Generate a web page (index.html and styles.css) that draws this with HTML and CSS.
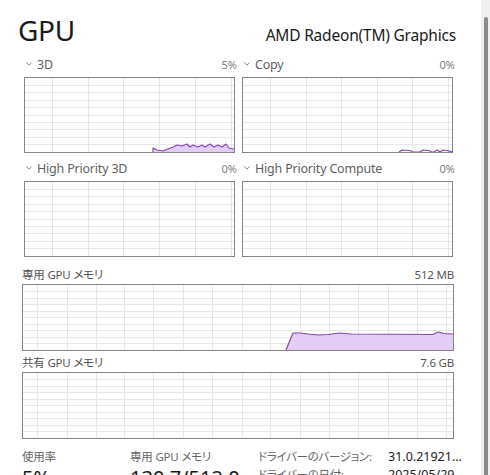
FILE: index.html
```html
<!DOCTYPE html>
<html lang="ja">
<head>
<meta charset="utf-8">
<title>GPU</title>
<link rel="stylesheet" href="styles.css">
</head>
<body>
<div class="window">
  <main class="content">
    <header class="header">
      <h1 class="title">GPU</h1>
      <div class="device">AMD Radeon(TM) Graphics</div>
    </header>

    <section class="engines">
      <div class="engine">
        <div class="engine-head">
          <span class="engine-name"><svg class="chev" viewBox="0 0 6 4"><polyline points="0.5,0.5 3,3.2 5.5,0.5"/></svg>3D</span>
          <span class="engine-val">5%</span>
        </div>
        <div class="chart chart-engine">
          <svg viewBox="0 0 209 74" preserveAspectRatio="none">
            <path class="grid" d="M0 7.5H209M0 14.5H209M0 22.5H209M0 29.5H209M0 37.5H209M0 44.5H209M0 51.5H209M0 59.5H209M0 66.5H209M27.5 0V74M63.5 0V74M98.5 0V74M134.5 0V74M170.5 0V74M206.5 0V74"/>
            <polygon class="area" points="128,74 128,70 132,72 138,73 143,71 148,69 152,67 157,68 162,66 165,69 168,67 173,69 177,67 180,69 185,66 189,69 193,67 197,69 201,66 204,70 209,71 209,74"/>
            <polyline class="line" points="128,74 128,70 132,72 138,73 143,71 148,69 152,67 157,68 162,66 165,69 168,67 173,69 177,67 180,69 185,66 189,69 193,67 197,69 201,66 204,70 209,71"/>
          </svg>
        </div>
      </div>
      <div class="engine">
        <div class="engine-head">
          <span class="engine-name"><svg class="chev" viewBox="0 0 6 4"><polyline points="0.5,0.5 3,3.2 5.5,0.5"/></svg>Copy</span>
          <span class="engine-val">0%</span>
        </div>
        <div class="chart chart-engine">
          <svg viewBox="0 0 209 74" preserveAspectRatio="none">
            <path class="grid" d="M0 7.5H209M0 14.5H209M0 22.5H209M0 29.5H209M0 37.5H209M0 44.5H209M0 51.5H209M0 59.5H209M0 66.5H209M27.5 0V74M63.5 0V74M98.5 0V74M134.5 0V74M169.5 0V74M205.5 0V74"/>
            <polyline class="line" points="156,74 159,72 167,72.5 170,74 177,74 180,72 186,72.5 189,74 191,74 194,72 197,74 200,72 204,72.5 209,74"/>
          </svg>
        </div>
      </div>
      <div class="engine">
        <div class="engine-head">
          <span class="engine-name"><svg class="chev" viewBox="0 0 6 4"><polyline points="0.5,0.5 3,3.2 5.5,0.5"/></svg>High Priority 3D</span>
          <span class="engine-val">0%</span>
        </div>
        <div class="chart chart-engine">
          <svg viewBox="0 0 209 74" preserveAspectRatio="none">
            <path class="grid" d="M0 7.5H209M0 14.5H209M0 22.5H209M0 29.5H209M0 37.5H209M0 44.5H209M0 51.5H209M0 59.5H209M0 66.5H209M27.5 0V74M63.5 0V74M98.5 0V74M134.5 0V74M170.5 0V74M206.5 0V74"/>
          </svg>
        </div>
      </div>
      <div class="engine">
        <div class="engine-head">
          <span class="engine-name"><svg class="chev" viewBox="0 0 6 4"><polyline points="0.5,0.5 3,3.2 5.5,0.5"/></svg>High Priority Compute</span>
          <span class="engine-val">0%</span>
        </div>
        <div class="chart chart-engine">
          <svg viewBox="0 0 209 74" preserveAspectRatio="none">
            <path class="grid" d="M0 7.5H209M0 14.5H209M0 22.5H209M0 29.5H209M0 37.5H209M0 44.5H209M0 51.5H209M0 59.5H209M0 66.5H209M27.5 0V74M63.5 0V74M98.5 0V74M134.5 0V74M169.5 0V74M205.5 0V74"/>
          </svg>
        </div>
      </div>
    </section>

    <section class="memory">
      <div class="mem-head"><span>専用 GPU メモリ</span><span>512 MB</span></div>
      <div class="chart chart-mem">
        <svg viewBox="0 0 430 65" preserveAspectRatio="none">
          <path class="grid" d="M0 6.5H430M0 13.5H430M0 19.5H430M0 26.5H430M0 32.5H430M0 39.5H430M0 45.5H430M0 52.5H430M0 58.5H430M14.5 0V65M44.5 0V65M73.5 0V65M101.5 0V65M130.5 0V65M160.5 0V65M189.5 0V65M219.5 0V65M247.5 0V65M277.5 0V65M306.5 0V65M335.5 0V65M365.5 0V65M394.5 0V65M423.5 0V65"/>
          <polygon class="area" points="263,65 270,48 277,48 285,49 295,50 305,49.5 317,48 328,49 410,49.5 415,47 421,48.5 430,49 430,65"/>
          <polyline class="line" points="263,65 270,48 277,48 285,49 295,50 305,49.5 317,48 328,49 410,49.5 415,47 421,48.5 430,49"/>
        </svg>
      </div>
      <div class="mem-head"><span>共有 GPU メモリ</span><span>7.6 GB</span></div>
      <div class="chart chart-mem">
        <svg viewBox="0 0 430 65" preserveAspectRatio="none">
          <path class="grid" d="M0 6.5H430M0 13.5H430M0 19.5H430M0 26.5H430M0 32.5H430M0 39.5H430M0 45.5H430M0 52.5H430M0 58.5H430M14.5 0V65M44.5 0V65M73.5 0V65M101.5 0V65M130.5 0V65M160.5 0V65M189.5 0V65M219.5 0V65M247.5 0V65M277.5 0V65M306.5 0V65M335.5 0V65M365.5 0V65M394.5 0V65M423.5 0V65"/>
        </svg>
      </div>
    </section>

    <section class="stats">
      <div class="stat-label">使用率</div>
      <div class="stat-label">専用 GPU メモリ</div>
      <div class="info-key">ドライバーのバージョン:</div>
      <div class="info-val">31.0.21921...</div>
      <div class="stat-val">5%</div>
      <div class="stat-val">130.7/512.0 MB</div>
      <div class="info-key">ドライバーの日付:</div>
      <div class="info-val">2025/05/29</div>
    </section>
  </main>
  <div class="scrollbar"><div class="thumb"></div></div>
</div>
</body>
</html>
```

FILE: styles.css
```css
* { box-sizing: border-box; }
html, body {
  margin: 0;
  padding: 0;
  background: #ffffff;
}
body {
  width: 490px;
  height: 475px;
  overflow: hidden;
  font-family: "Noto Sans", "Noto Sans CJK JP", sans-serif;
  color: #1a1a1a;
}
.window {
  display: flex;
  width: 490px;
  height: 475px;
}
.content {
  width: 481px;
  padding: 0 0 0 22px;
  overflow: hidden;
}
.header {
  display: flex;
  align-items: baseline;
  justify-content: space-between;
  width: 434px;
  padding-top: 11px;
  height: 54px;
}
.title {
  margin: 0 0 0 -4px;
  font-size: 28px;
  line-height: 38px;
  font-weight: 400;
  letter-spacing: -0.3px;
}
.device {
  font-size: 15.5px;
  line-height: 20px;
  letter-spacing: -0.2px;
}
.engines {
  display: grid;
  grid-template-columns: 211px 211px;
  column-gap: 7px;
  row-gap: 5px;
  margin-left: 2px;
  width: 432px;
}
.engine-head {
  display: flex;
  justify-content: space-between;
  align-items: center;
  height: 20px;
  margin-bottom: 3px;
  margin-right: -2px;
}
.engine-name {
  display: flex;
  align-items: center;
  gap: 5px;
  padding-left: 2px;
  font-size: 12.5px;
  color: #5f5f5f;
  letter-spacing: -0.2px;
}
.engine-val {
  font-size: 11px;
  color: #808080;
}
.chev {
  width: 6px;
  height: 4px;
  fill: none;
  stroke: #8a8a8a;
  stroke-width: 1;
}
.chart {
  border: 1px solid #858585;
  background: #ffffff;
}
.chart svg {
  display: block;
  width: 100%;
  height: 100%;
}
.chart-engine {
  height: 76px;
}
.chart-mem {
  width: 432px;
  height: 67px;
}
.grid {
  stroke: #e6e6e6;
  stroke-width: 1;
  fill: none;
}
.area {
  fill: #e3cdf7;
  stroke: none;
}
.line {
  fill: none;
  stroke: #8646b8;
  stroke-width: 1.2;
  stroke-linejoin: round;
}
.memory {
  margin-top: 9px;
  width: 432px;
  display: flex;
  flex-direction: column;
}
.mem-head {
  display: flex;
  justify-content: space-between;
  align-items: center;
  height: 16px;
  margin-bottom: 2px;
  margin-top: 3px;
  font-size: 11.5px;
  color: #555555;
  font-feature-settings: "palt";
  letter-spacing: -0.2px;
}
.memory .mem-head:first-child {
  margin-top: 0;
}
.stats {
  display: grid;
  grid-template-columns: 108px 128px 130px 1fr;
  grid-template-rows: 18px 24px;
  margin-top: 9px;
  font-feature-settings: "palt";
}
.stat-label {
  font-size: 11.5px;
  line-height: 18px;
  color: #666666;
  letter-spacing: -0.2px;
}
.info-key {
  font-size: 11.5px;
  line-height: 18px;
  color: #666666;
  letter-spacing: -0.3px;
}
.info-val {
  font-size: 12.5px;
  line-height: 18px;
  color: #222222;
}
.stat-val {
  font-size: 20px;
  line-height: 24px;
  color: #1a1a1a;
}
.scrollbar {
  width: 9px;
  height: 475px;
  background: #f0f0f0;
  padding: 17px 2px 0 3px;
}
.thumb {
  width: 4px;
  height: 470px;
  background: #8a8a8a;
  border-radius: 2px;
}
```
